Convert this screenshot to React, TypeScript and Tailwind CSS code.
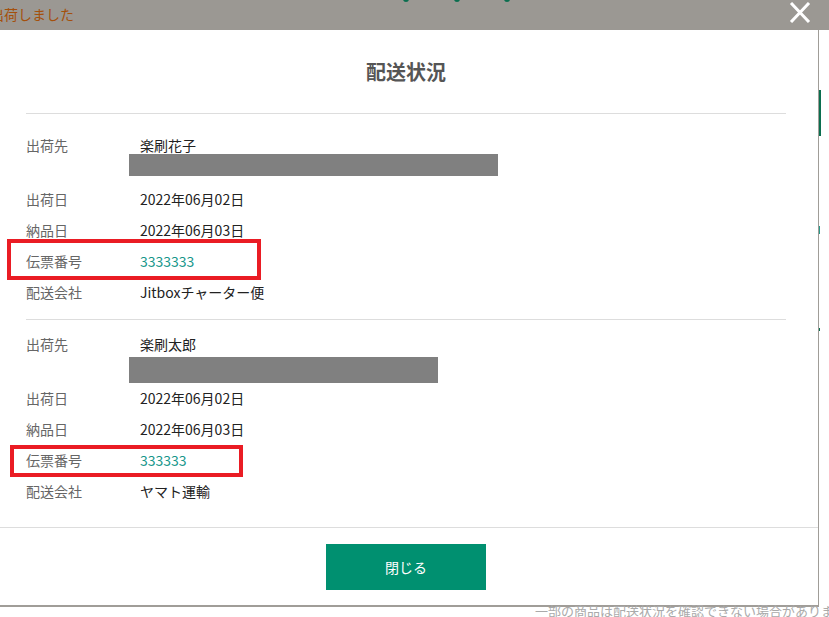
import React from 'react';

type Shipment = {
  name: string;
  barWidth: string;
  barClass: string;
  sectionClass: string;
  rowsClass: string;
  shipDate: string;
  deliveryDate: string;
  slipNo: string;
  carrier: string;
};

const shipments: Shipment[] = [
  {
    name: '楽刷花子',
    barWidth: 'w-[369px]',
    barClass: 'h-[22px] mt-[1px]',
    sectionClass: 'pt-[21px] pb-[11px]',
    rowsClass: 'pt-[8px]',
    shipDate: '2022年06月02日',
    deliveryDate: '2022年06月03日',
    slipNo: '3333333',
    carrier: 'Jitboxチャーター便',
  },
  {
    name: '楽刷太郎',
    barWidth: 'w-[309px]',
    barClass: 'h-[26px] mt-[5px]',
    sectionClass: 'pt-[14px] pb-[20px]',
    rowsClass: 'pt-0',
    shipDate: '2022年06月02日',
    deliveryDate: '2022年06月03日',
    slipNo: '333333',
    carrier: 'ヤマト運輸',
  },
];

const Row: React.FC<{ label: string; children: React.ReactNode }> = ({ label, children }) => (
  <div className="flex h-[31px] items-center">
    <span className="w-[114px] shrink-0 text-[#666]">{label}</span>
    <span>{children}</span>
  </div>
);

export default function App() {
  return (
    <div
      className="relative w-[829px] h-[617px] overflow-hidden bg-white text-[14px] text-[#222]"
      style={{ fontFamily: '"Noto Sans CJK JP", "Noto Sans", sans-serif' }}
    >
      {/* Overlay band */}
      <div className="relative h-[30px] bg-[#9b9893]">
        <span className="absolute left-[-10px] top-[4px] text-[14px] leading-[20px] text-[#a4500c]">出荷しました</span>
        <span className="absolute left-[403px] top-[-4px] h-[6px] w-[6px] rounded-full bg-[#0b6e4f]" />
        <span className="absolute left-[454px] top-[-4px] h-[6px] w-[6px] rounded-full bg-[#0b6e4f]" />
        <span className="absolute left-[504px] top-[-4px] h-[6px] w-[6px] rounded-full bg-[#0b6e4f]" />
        {/* close */}
        <svg className="absolute left-[789px] top-[2px]" width="22" height="21" viewBox="0 0 22 21">
          <path d="M2 1 L20 20 M20 1 L2 20" stroke="#fff" strokeWidth="3" />
        </svg>
      </div>

      <div className="flex">
        {/* Modal */}
        <div className="w-[819px] h-[577px] border-r border-b-2 border-[#a09d98] bg-white flex flex-col">
          <div className="w-[812px] px-[26px]">
            <h2 className="h-[83px] flex items-center justify-center text-[20px] font-bold text-[#555]">配送状況</h2>

            {shipments.map((s, i) => (
              <div key={i} className={`border-t border-[#ddd] ${s.sectionClass}`}>
                <div className="flex">
                  <span className="w-[114px] shrink-0 leading-[20px] text-[#666]">出荷先</span>
                  <div className="flex flex-col">
                    <span className="leading-[20px] h-[18px] overflow-visible">{s.name}</span>
                    <div className={`${s.barWidth} ${s.barClass} -ml-[11px] bg-[#808080]`} />
                  </div>
                </div>
                <div className={s.rowsClass}>
                  <Row label="出荷日">{s.shipDate}</Row>
                  <Row label="納品日">{s.deliveryDate}</Row>
                  <Row label="伝票番号">
                    <span className="text-[#16968a]">{s.slipNo}</span>
                  </Row>
                  <Row label="配送会社">{s.carrier}</Row>
                </div>
              </div>
            ))}
          </div>

          <div className="flex-1 border-t border-[#ddd] w-[818px] flex justify-center pt-[16px]">
            <button className="-ml-[6px] h-[46px] w-[160px] bg-[#009070] text-white text-[14px]">閉じる</button>
          </div>
        </div>

        {/* Right strip of page behind */}
        <div className="flex-1 relative">
          <span className="absolute left-0 top-[60px] h-[46px] w-[2px] bg-[#0b6e4f]" />
          <span className="absolute left-0 top-[196px] h-[8px] w-[1px] bg-[#2a9a8a]" />
          <span className="absolute left-0 top-[298px] h-[3px] w-[1px] bg-[#0b6e4f]" />
        </div>
      </div>

      {/* Page behind, below modal */}
      <div className="pl-[535px] whitespace-nowrap text-[13px] leading-[16px] text-[#aaa] -mt-[4px]">
        一部の商品は配送状況を確認できない場合がありますのでご了承ください
      </div>

      {/* Annotation boxes */}
      <div className="absolute left-[7px] top-[239px] w-[254px] h-[41px] border-[4px] border-[#ea1c24]" />
      <div className="absolute left-[10px] top-[445px] w-[233px] h-[32px] border-[4px] border-[#ea1c24]" />
    </div>
  );
}
